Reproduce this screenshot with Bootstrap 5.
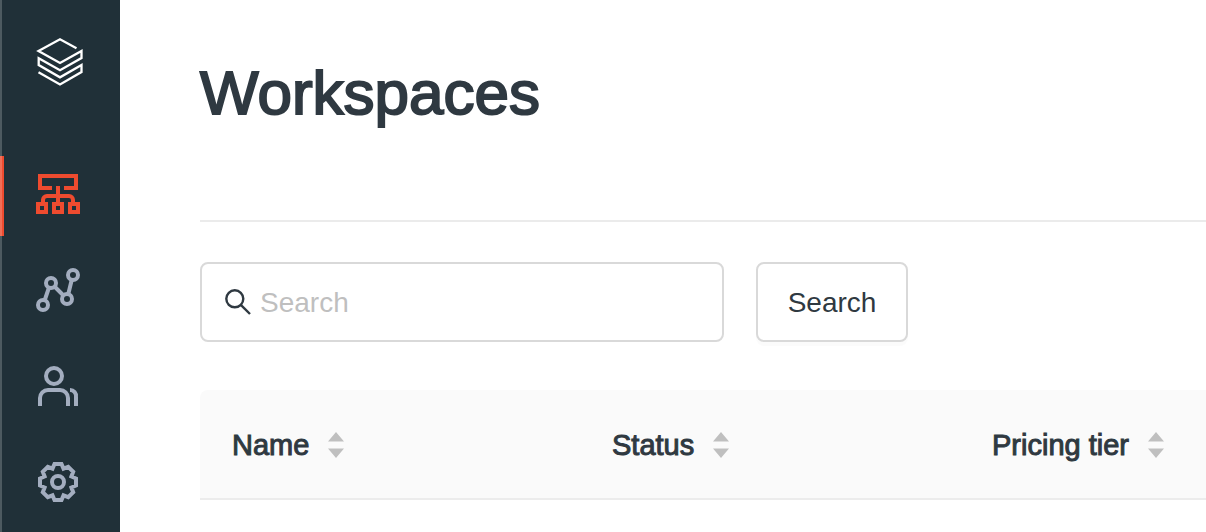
<!DOCTYPE html>
<html lang="en">
<head>
<meta charset="utf-8">
<meta name="viewport" content="width=device-width, initial-scale=1">
<title>Workspaces</title>
<link href="https://cdn.jsdelivr.net/npm/bootstrap@5.3.0/dist/css/bootstrap.min.css" rel="stylesheet">
<style>
  body { font-family: "Liberation Sans", Arial, sans-serif; font-size: 28px; line-height: 40px; color: #2f3941; background: #fff; overflow: hidden; }
  .sidebar { width: 120px; background: #203038; border-left: 2px solid #4d5a60; padding-top: 36px; }
  .sidebar svg { display: block; fill: none; stroke: currentColor; }
  .brand-link { color: #fff; padding-left: 34px; margin-bottom: 68px; }
  .side-nav { gap: 16px; }
  .side-link { position: relative; height: 80px; padding: 14px 0 0 32px; color: #a3adbf; }
  .side-link svg { stroke-width: 4px; }
  .side-link.active { color: #ee4b2f; }
  .side-link.active::before { content: ""; position: absolute; left: -2px; top: 0; bottom: 0; width: 4px; background: linear-gradient(90deg, #f06f58 50%, #ee4b2f 50%); }
  .content { padding-left: 80px; }
  .page-title { font-size: 62px; line-height: 72px; font-weight: 400; padding: 57px 0 91px; border-bottom: 2px solid #ebebeb; -webkit-text-stroke: 2px currentColor; }
  .tools { gap: 32px; padding: 40px 0 48px; }
  .search-box { width: 524px; height: 80px; border: 2px solid #d9d9d9; border-radius: 8px; padding: 0 22px; gap: 8px; }
  .search-box input { border: 0; padding: 2px 0 0; font-size: 28px; color: inherit; box-shadow: none; background: none; }
  .search-box input:focus { box-shadow: none; }
  .search-box input::placeholder { color: #bfbfbf; }
  .btn-search { width: 152px; height: 80px; padding: 2px 0 0; font-size: 28px; color: #2f3941; background: #fff; border: 2px solid #d9d9d9; border-radius: 8px; box-shadow: 0 4px 0 rgba(0, 0, 0, .016); }
  .list-table { table-layout: fixed; border-collapse: separate; border-spacing: 0; }
  .list-table th { height: 110px; padding: 2px 0 0 32px; background: #fafafa; border-bottom: 2px solid #ececec; font-size: 29px; font-weight: 400; color: #2f3941; white-space: nowrap; vertical-align: middle; -webkit-text-stroke: 1px currentColor; }
  .list-table th:first-child { border-top-left-radius: 8px; }
  .wide-col { width: 380px; }
  .sorter { gap: 18px; }
</style>
</head>
<body>
<div class="d-flex min-vh-100">
  <aside class="sidebar flex-shrink-0">
    <a class="brand-link d-block" href="#" aria-label="Home">
      <svg width="48" height="52" viewBox="0 -2 48 52" stroke-width="2.3"><path d="M40.5 10.3 24 1.3 2.5 13 24 25 45.5 13V20L24 32.3 2.7 20.3V27L24 39.3 45.5 27V34L24 46.5 2.5 34.3"/></svg>
    </a>
    <nav class="side-nav d-flex flex-column" aria-label="Main">
      <a class="side-link active" href="#" aria-label="Workspaces" aria-current="page">
        <svg width="48" height="48" viewBox="0 0 48 48"><path d="M18 18H6V6H42V18H30M24 16V34M9 34V30a4 4 0 0 1 4-4H35a4 4 0 0 1 4 4V34"/><path fill="#203038" d="M4 34h8v8H4zM20 34h8v8h-8zM36 34h8v8h-8z"/></svg>
      </a>
      <a class="side-link" href="#" aria-label="Usage">
        <svg width="48" height="48" viewBox="0 0 48 48"><path d="M10.600 34.500 15 21.500M20.500 20.500 29.500 29.500M34.300 28 37.700 14"/><circle cx="9" cy="39" r="5"/><circle cx="17" cy="17" r="5"/><circle cx="33" cy="33" r="5"/><circle cx="39" cy="9" r="5"/></svg>
      </a>
      <a class="side-link" href="#" aria-label="Users">
        <svg width="48" height="48" viewBox="0 0 48 48"><circle cx="20" cy="14" r="8"/><path d="M6 44V36a8 8 0 0 1 8-8H26a8 8 0 0 1 8 8V44M36 28a6 6 0 0 1 6 7V44"/></svg>
      </a>
      <a class="side-link" href="#" aria-label="Settings">
        <svg width="48" height="48" viewBox="0 0 48 48"><path d="M20.500 6H27.500L29.500 10.600 34.200 8.800 39.200 13.800 37.400 18.500 42 20.500V27.500L37.400 29.500 39.200 34.200 34.200 39.200 29.500 37.400 27.500 42H20.500L18.500 37.400 13.800 39.200 8.800 34.200 10.600 29.500 6 27.500V20.500L10.600 18.500 8.800 13.800 13.800 8.800 18.500 10.600Z"/><circle cx="24" cy="24" r="6"/></svg>
      </a>
    </nav>
  </aside>
  <main class="content flex-grow-1 overflow-hidden">
    <h1 class="page-title mb-0">Workspaces</h1>
    <form class="tools d-flex align-items-center" onsubmit="return false">
      <div class="search-box d-flex align-items-center">
        <label for="q" class="d-flex flex-shrink-0" aria-label="Search">
          <svg width="28" height="28" viewBox="0 0 28 28" fill="none" stroke="#2f3941" stroke-width="2.400"><circle cx="10.800" cy="10.800" r="8.500"/><path d="M16.800 16.800 26 26"/></svg>
        </label>
        <input id="q" class="form-control" type="text" placeholder="Search">
      </div>
      <button class="btn btn-search" type="submit">Search</button>
    </form>
    <table class="list-table w-100">
      <colgroup><col class="wide-col"><col class="wide-col"><col></colgroup>
      <thead>
        <tr>
          <th scope="col"><span class="sorter d-flex align-items-center">Name <svg width="18" height="26" viewBox="0 0 18 26" fill="#bfbfbf"><path d="M9 0 17 9.500H1zM1 16.500H17L9 26z"/></svg></span></th>
          <th scope="col"><span class="sorter d-flex align-items-center">Status <svg width="18" height="26" viewBox="0 0 18 26" fill="#bfbfbf"><path d="M9 0 17 9.500H1zM1 16.500H17L9 26z"/></svg></span></th>
          <th scope="col"><span class="sorter d-flex align-items-center">Pricing tier <svg width="18" height="26" viewBox="0 0 18 26" fill="#bfbfbf"><path d="M9 0 17 9.500H1zM1 16.500H17L9 26z"/></svg></span></th>
        </tr>
      </thead>
    </table>
  </main>
</div>
<script src="https://cdn.jsdelivr.net/npm/bootstrap@5.3.0/dist/js/bootstrap.bundle.min.js"></script>
</body>
</html>
